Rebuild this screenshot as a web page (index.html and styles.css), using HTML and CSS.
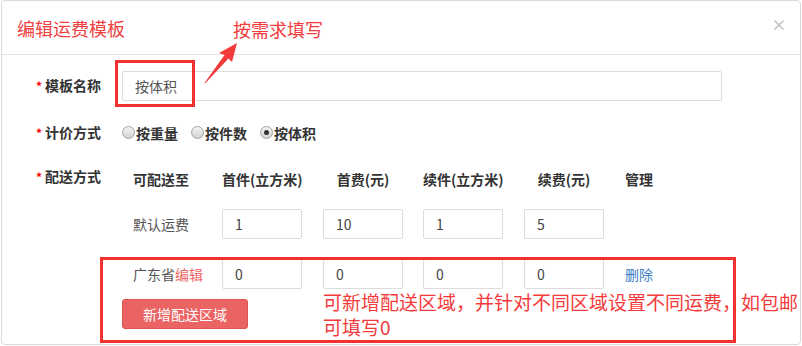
FILE: index.html
```html
<!DOCTYPE html>
<html lang="zh-CN">
<head>
  <meta charset="UTF-8">
  <meta name="viewport" content="width=device-width, initial-scale=1.0">
  <title>编辑运费模板</title>
  <link rel="stylesheet" href="styles.css">
</head>
<body>
  <div class="modal">
    <div class="modal-header">
      <h3 class="modal-title">编辑运费模板</h3>
      <span class="close">
        <svg width="10" height="10" viewBox="0 0 10 10"><path d="M0.5 0.5L9.5 9.5M9.5 0.5L0.5 9.5" stroke="#bdbdbd" stroke-width="1.4"/></svg>
      </span>
    </div>
    <div class="modal-body">
      <div class="form-row">
        <label class="form-label"><i>*</i>模板名称</label>
        <input class="name-input" type="text" value="按体积">
      </div>
      <div class="form-row">
        <label class="form-label"><i>*</i>计价方式</label>
        <div class="radios">
          <label class="radio"><span class="dot"></span>按重量</label>
          <label class="radio"><span class="dot"></span>按件数</label>
          <label class="radio"><span class="dot checked"></span>按体积</label>
        </div>
      </div>
      <div class="form-row ship-row">
        <label class="form-label"><i>*</i>配送方式</label>
        <div class="ship">
          <div class="ship-grid">
            <div class="th first">可配送至</div>
            <div class="th">首件(立方米)</div>
            <div class="th">首费(元)</div>
            <div class="th">续件(立方米)</div>
            <div class="th">续费(元)</div>
            <div class="th last">管理</div>

            <div class="td first">默认运费</div>
            <div class="td"><input class="cell-input" type="text" value="1"></div>
            <div class="td"><input class="cell-input" type="text" value="10"></div>
            <div class="td"><input class="cell-input" type="text" value="1"></div>
            <div class="td"><input class="cell-input" type="text" value="5"></div>
            <div class="td last"></div>

            <div class="td first">广东省<a class="edit-link">编辑</a></div>
            <div class="td"><input class="cell-input" type="text" value="0"></div>
            <div class="td"><input class="cell-input" type="text" value="0"></div>
            <div class="td"><input class="cell-input" type="text" value="0"></div>
            <div class="td"><input class="cell-input" type="text" value="0"></div>
            <div class="td last"><a class="del-link">删除</a></div>
          </div>
          <div class="ship-actions">
            <button class="add-btn">新增配送区域</button>
            <p class="note note-bottom">可新增配送区域，并针对不同区域设置不同运费，如包邮<br>可填写0</p>
          </div>
        </div>
      </div>
    </div>

    <!-- screenshot markup -->
    <div class="mark mark-name"></div>
    <div class="mark mark-area"></div>
    <p class="note note-top">按需求填写</p>
    <svg class="arrow" width="42" height="46" viewBox="0 0 42 46">
      <polygon points="37,3 32,22 28.5,18.5 5,43.5 4.5,43 24.5,15 19,13" fill="#f43b3b"/>
    </svg>
  </div>
</body>
</html>
```

FILE: styles.css
```css
body {
  margin: 0;
  background-color: #fff;
  font-family: "Noto Sans CJK SC", "Noto Sans", sans-serif;
  color: #333;
}
.modal {
  position: relative;
  box-sizing: border-box;
  width: 800px;
  height: 345px;
  margin-left: 1px;
  border: 1px solid #d9d9d9;
  border-radius: 4px;
  background-color: #fff;
}
.modal-header {
  display: flex;
  justify-content: space-between;
  align-items: center;
  height: 53px;
  padding: 0 16px 0 15px;
  border-bottom: 1px solid #e5e5e5;
}
.modal-title {
  margin: 0;
  font-size: 18px;
  font-weight: normal;
  line-height: 24px;
  color: #f0403f;
}
.close {
  display: flex;
  margin-top: -6px;
}
.modal-body {
  padding-top: 15px;
}
.form-row {
  display: flex;
  align-items: center;
  margin-bottom: 16px;
}
.form-label {
  width: 99px;
  padding-right: 5px;
  margin-right: 16px;
  text-align: right;
  font-size: 14px;
  font-weight: bold;
  line-height: 30px;
  color: #333;
  white-space: nowrap;
}
.form-label i {
  font-style: normal;
  font-size: 12px;
  color: #f00;
  margin-right: 3px;
}
.name-input {
  box-sizing: border-box;
  width: 600px;
  height: 30px;
  padding: 0 12px;
  border: 1px solid #dcdcdc;
  border-radius: 2px;
  font-family: inherit;
  font-size: 14px;
  color: #555;
  outline: none;
}
.radios {
  display: flex;
  gap: 13px;
  line-height: 30px;
}
.radio {
  display: flex;
  align-items: center;
  gap: 1px;
  font-size: 14px;
  font-weight: bold;
  color: #333;
}
.dot {
  position: relative;
  box-sizing: border-box;
  width: 13px;
  height: 13px;
  border: 1px solid #a3a3a3;
  border-radius: 50%;
  background: linear-gradient(#f4f4f4, #d2d2d2);
}
.dot.checked::after {
  content: "";
  position: absolute;
  left: 3px;
  top: 3px;
  width: 5px;
  height: 5px;
  border-radius: 50%;
  background-color: #333;
}
.ship-row {
  align-items: flex-start;
  margin-top: 21px;
}
.ship-row .form-label {
  line-height: 14px;
}
.ship-grid {
  display: grid;
  grid-template-columns: 100px 101px 100px 101px 100px 60px;
  grid-template-rows: 20px 30px 30px;
  row-gap: 20px;
  font-size: 14px;
}
.th {
  width: 80px;
  line-height: 20px;
  text-align: center;
  font-weight: bold;
  color: #333;
  white-space: nowrap;
}
.td {
  line-height: 30px;
  color: #555;
  white-space: nowrap;
}
.first {
  width: auto;
  padding-left: 11px;
  text-align: left;
}
.last {
  width: auto;
  padding-left: 1px;
  text-align: left;
}
.cell-input {
  box-sizing: border-box;
  width: 80px;
  height: 30px;
  padding: 0 12px;
  border: 1px solid #dcdcdc;
  border-radius: 2px;
  font-family: inherit;
  font-size: 14px;
  color: #444;
  outline: none;
}
.edit-link {
  color: #f06565;
}
.del-link {
  color: #3d7dc6;
}
.ship-actions {
  display: flex;
  align-items: center;
  gap: 75px;
  height: 30px;
  margin-top: 10px;
}
.add-btn {
  width: 126px;
  height: 30px;
  border: 1px solid #d9534f;
  border-radius: 3px;
  background-color: #eb6464;
  color: #fff;
  font-family: inherit;
  font-size: 14px;
  cursor: pointer;
}
.note {
  margin: 0;
  color: #f43b3b;
  white-space: nowrap;
}
.note-bottom {
  font-size: 19px;
  line-height: 25px;
}
.note-top {
  position: absolute;
  left: 231px;
  top: 18px;
  font-size: 18px;
  line-height: 20px;
}
.mark {
  position: absolute;
  box-sizing: border-box;
  border: 3px solid #f23030;
}
.mark-name {
  left: 113px;
  top: 59px;
  width: 80px;
  height: 47px;
}
.mark-area {
  left: 98px;
  top: 256px;
  width: 636px;
  height: 86px;
}
.arrow {
  position: absolute;
  left: 198px;
  top: 39px;
}
```
